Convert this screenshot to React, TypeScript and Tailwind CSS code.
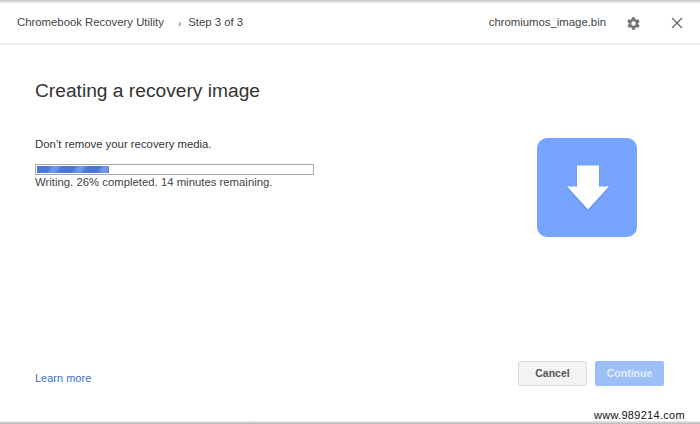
export default function App() {
  return (
    <div className="relative flex h-[424px] w-[700px] flex-col overflow-hidden bg-white font-['Liberation_Sans',Arial,sans-serif] text-[#333]">
      <div className="h-[3px] shrink-0 bg-gradient-to-b from-[#c4c4c4] to-[#f2f2f2]" />
      <header className="flex h-[42px] shrink-0 items-center border-b-2 border-[#ececec] pl-[17px] text-[11.35px]">
        <span className="text-[#444]">Chromebook Recovery Utility</span>
        <span className="ml-[14px] text-[10px] text-[#666]">›</span>
        <span className="ml-[7px] text-[#444]">Step 3 of 3</span>
        <span className="ml-auto text-[#444]">chromiumos_image.bin</span>
        <svg viewBox="0 0 24 24" className="ml-[20px] h-[15px] w-[15px]" fill="#757575" aria-hidden="true">
          <path d="M19.4 13a7.5 7.5 0 0 0 0-2l2.1-1.6a.5.5 0 0 0 .1-.7l-2-3.4a.5.5 0 0 0-.6-.2l-2.5 1a7.3 7.3 0 0 0-1.7-1l-.4-2.7a.5.5 0 0 0-.5-.4h-4a.5.5 0 0 0-.5.4l-.4 2.7a7.3 7.3 0 0 0-1.7 1l-2.5-1a.5.5 0 0 0-.6.2l-2 3.4a.5.5 0 0 0 .1.7L4.6 11a7.5 7.5 0 0 0 0 2l-2.1 1.6a.5.5 0 0 0-.1.7l2 3.4c.1.2.4.3.6.2l2.5-1a7.3 7.3 0 0 0 1.7 1l.4 2.7c0 .2.3.4.5.4h4c.2 0 .5-.2.5-.4l.4-2.7a7.3 7.3 0 0 0 1.7-1l2.5 1c.2.1.5 0 .6-.2l2-3.4a.5.5 0 0 0-.1-.7L19.4 13zM12 15.5a3.5 3.5 0 1 1 0-7 3.5 3.5 0 0 1 0 7z" />
        </svg>
        <svg viewBox="0 0 12 12" className="ml-[30px] mr-[17px] h-[12px] w-[12px]" stroke="#666" strokeWidth="1.3" fill="none" aria-hidden="true">
          <path d="M1 1l10 10M11 1L1 11" />
        </svg>
      </header>

      <main className="flex flex-1 flex-col pl-[35px] pr-[36px]">
        <h1 className="mt-[33px] text-[19.2px] leading-[26px] font-normal text-[#333]">Creating a recovery image</h1>
        <div className="flex">
          <div className="w-[279px]">
            <p className="mt-[33px] text-[11.35px] leading-[14px] text-[#333]">Don’t remove your recovery media.</p>
            <div className="mt-[13px] h-[11px] w-[279px] border border-[#aaa] bg-white p-px">
              <div className="h-full w-[26%] bg-[repeating-linear-gradient(115deg,#4a76db_0px,#4a76db_11px,#6f95e8_15px,#6f95e8_19px,#4a76db_23px)]" />
            </div>
            <p className="text-[11.35px] leading-[14px] text-[#444]">Writing. 26% completed. 14 minutes remaining.</p>
          </div>
          <div className="ml-auto mr-[27px] mt-[34px] flex h-[99px] w-[100px] items-center justify-center rounded-[10px] bg-[#77a4ff]">
            <svg viewBox="0 0 42 44" className="ml-[2px] h-[45px] w-[42px] drop-shadow-[0_1px_1px_rgba(60,90,160,0.4)]" fill="#fff" aria-hidden="true">
              <path d="M10 0h22v21h10L21 44 0 21h10z" />
            </svg>
          </div>
        </div>
        <div className="mt-auto mb-[35px] flex items-end justify-between">
          <a className="mb-[1px] text-[11px] leading-[14px] text-[#3b6fc4]">Learn more</a>
          <div className="flex gap-[8px]">
            <button className="h-[25px] w-[69px] rounded-[2px] border border-[#dcdcdc] bg-[#f3f3f3] text-[10.5px] font-bold text-[#555]">Cancel</button>
            <button className="h-[25px] w-[69px] rounded-[2px] border border-[#9cbdf5] bg-[#9dbff8] text-[10.5px] font-bold text-[#e4eeff]">Continue</button>
          </div>
        </div>
      </main>
      <div className="absolute bottom-[2px] right-[15px] text-[11px] leading-[14px] tracking-[0.3px] text-[#111]">www.989214.com</div>
      <div className="h-[3px] shrink-0 bg-gradient-to-b from-[#f0f0f0] to-[#b5b5b5]" />
    </div>
  );
}
